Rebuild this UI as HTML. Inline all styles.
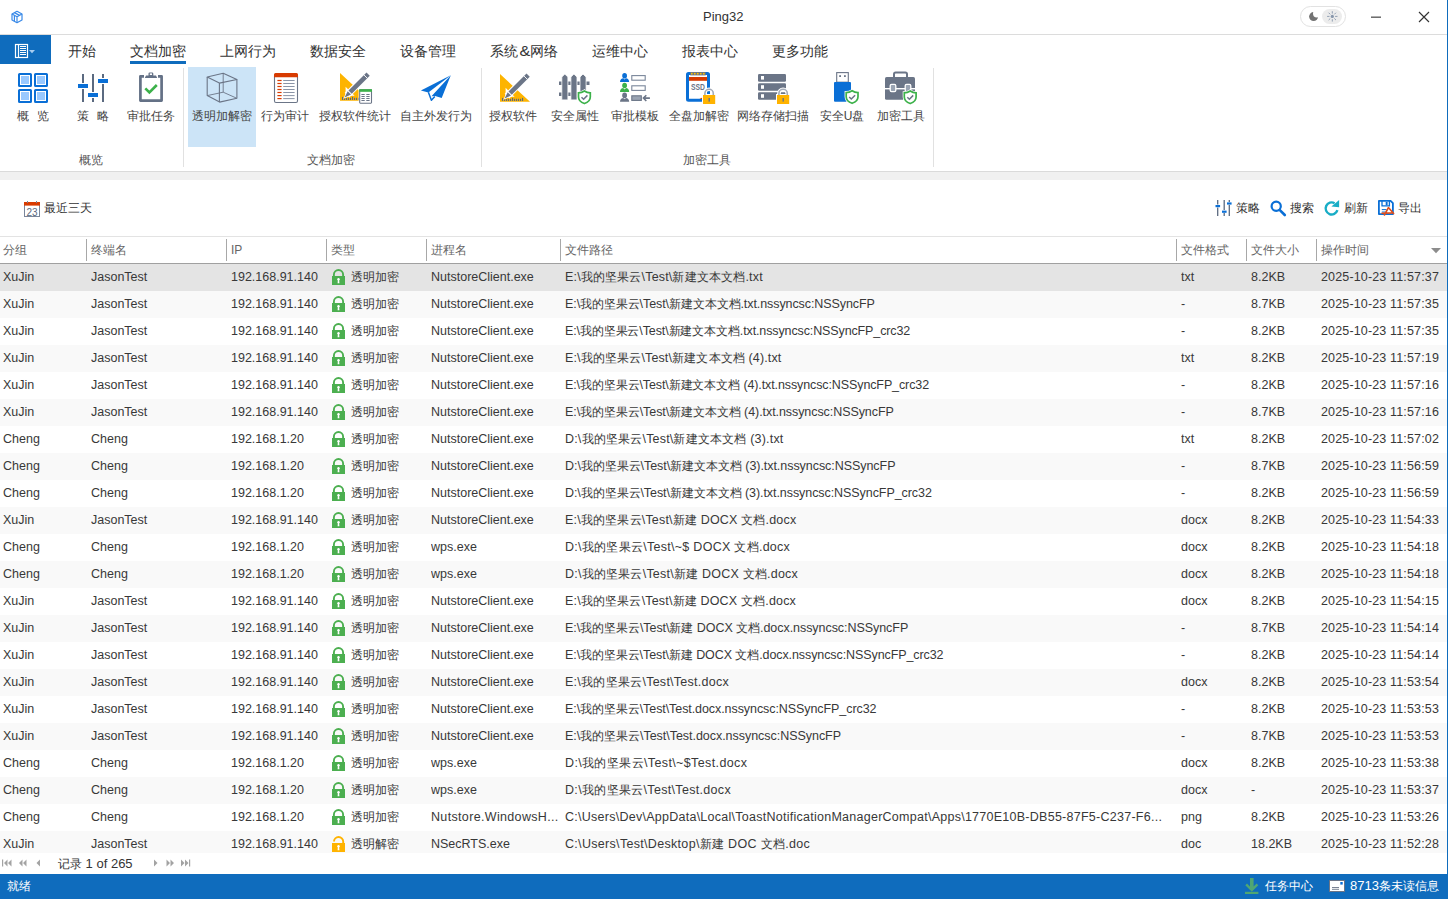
<!DOCTYPE html>
<html><head><meta charset="utf-8"><title>Ping32</title>
<style>
html,body{margin:0;padding:0}
body{width:1448px;height:899px;overflow:hidden;position:relative;background:#fff;font-family:"Liberation Sans",sans-serif;color:#333}
i{font-style:normal;font-size:12px}
.a{position:absolute;white-space:nowrap}
.tab{position:absolute;top:41px;font-size:14px;line-height:20px;color:#333}
.tab i{font-size:14px}
.lbl{position:absolute;top:107px;font-size:12px;line-height:18px;color:#444;text-align:center}
.glbl{position:absolute;top:151px;font-size:12px;line-height:18px;color:#555;text-align:center}
.vsep{position:absolute;width:1px;background:#e1e1e1}
.r{position:absolute;left:0;width:1447px;height:27px}
.c{position:absolute;top:0;height:27px;line-height:26px;font-size:12.5px;white-space:nowrap;overflow:hidden;color:#383838}
.lk{position:absolute;left:0;top:5px}
.hc{position:absolute;top:241px;line-height:18px;font-size:12px;color:#666;white-space:nowrap}
.hs{position:absolute;top:239px;width:1px;height:22px;background:#a8a8a8}
.tb{position:absolute;top:199px;font-size:12px;line-height:18px;color:#333}
svg.ov{position:absolute;left:0;top:0}
</style></head><body>
<!-- title bar -->
<div class="a" style="left:0;top:34px;width:1448px;height:1px;background:#dcdcdc"></div>
<div class="a" style="left:703px;top:8px;font-size:13px;line-height:18px;color:#333">Ping32</div>
<div class="a" style="left:1300px;top:6px;width:44px;height:19px;border:1px solid #e2e2e2;border-radius:11px"></div>
<div class="a" style="left:1322px;top:9px;width:20px;height:15px;border-radius:8px;background:#ececec"></div>
<!-- app button -->
<div class="a" style="left:0;top:35px;width:51px;height:29px;background:#0f6cbd"></div>
<!-- tabs -->
<div class="tab" style="left:68px"><i>开始</i></div>
<div class="tab" style="left:130px"><i>文档加密</i></div>
<div class="a" style="left:130px;top:61px;width:56px;height:3px;background:#0f6cbd"></div>
<div class="tab" style="left:220px"><i>上网行为</i></div>
<div class="tab" style="left:310px"><i>数据安全</i></div>
<div class="tab" style="left:400px"><i>设备管理</i></div>
<div class="tab" style="left:490px"><i>系统</i><span style="font-size:14.5px;margin:0 1px 0 1.5px;display:inline-block;transform:scaleX(1.12)">&amp;</span><i>网络</i></div>
<div class="tab" style="left:592px"><i>运维中心</i></div>
<div class="tab" style="left:682px"><i>报表中心</i></div>
<div class="tab" style="left:772px"><i>更多功能</i></div>
<!-- ribbon -->
<div class="a" style="left:188px;top:67px;width:68px;height:80px;background:#cce4f7"></div>
<div class="lbl" style="left:17px;width:32px;text-align:left"><i>概</i><i style="margin-left:8px">览</i></div>
<div class="lbl" style="left:77px;width:32px;text-align:left"><i>策</i><i style="margin-left:8px">略</i></div>
<div class="lbl" style="left:121px;width:60px"><i>审批任务</i></div>
<div class="lbl" style="left:187px;width:70px"><i>透明加解密</i></div>
<div class="lbl" style="left:255px;width:60px"><i>行为审计</i></div>
<div class="lbl" style="left:315px;width:80px"><i>授权软件统计</i></div>
<div class="lbl" style="left:396px;width:80px"><i>自主外发行为</i></div>
<div class="lbl" style="left:483px;width:60px"><i>授权软件</i></div>
<div class="lbl" style="left:545px;width:60px"><i>安全属性</i></div>
<div class="lbl" style="left:605px;width:60px"><i>审批模板</i></div>
<div class="lbl" style="left:664px;width:70px"><i>全盘加解密</i></div>
<div class="lbl" style="left:733px;width:80px"><i>网络存储扫描</i></div>
<div class="lbl" style="left:812px;width:60px"><i>安全U盘</i></div>
<div class="lbl" style="left:871px;width:60px"><i>加密工具</i></div>
<div class="glbl" style="left:61px;width:60px"><i>概览</i></div>
<div class="glbl" style="left:291px;width:80px"><i>文档加密</i></div>
<div class="glbl" style="left:667px;width:80px"><i>加密工具</i></div>
<div class="vsep" style="left:183px;top:68px;height:99px"></div>
<div class="vsep" style="left:481px;top:68px;height:99px"></div>
<div class="vsep" style="left:933px;top:68px;height:99px"></div>
<div class="a" style="left:0;top:171px;width:1448px;height:1px;background:#dadada"></div>
<div class="a" style="left:0;top:172px;width:1448px;height:8px;background:#f0f0f0"></div>
<!-- toolbar -->
<div class="tb" style="left:44px"><i>最近三天</i></div>
<div class="tb" style="left:1236px"><i>策略</i></div>
<div class="tb" style="left:1290px"><i>搜索</i></div>
<div class="tb" style="left:1344px"><i>刷新</i></div>
<div class="tb" style="left:1398px"><i>导出</i></div>
<div class="a" style="left:0;top:236px;width:1448px;height:1px;background:#e3e3e3"></div>
<!-- header -->
<div class="hc" style="left:3px"><i>分组</i></div>
<div class="hc" style="left:91px"><i>终端名</i></div>
<div class="hs" style="left:86px"></div>
<div class="hc" style="left:231px">IP</div>
<div class="hs" style="left:226px"></div>
<div class="hc" style="left:331px"><i>类型</i></div>
<div class="hs" style="left:326px"></div>
<div class="hc" style="left:431px"><i>进程名</i></div>
<div class="hs" style="left:426px"></div>
<div class="hc" style="left:565px"><i>文件路径</i></div>
<div class="hs" style="left:560px"></div>
<div class="hc" style="left:1181px"><i>文件格式</i></div>
<div class="hs" style="left:1176px"></div>
<div class="hc" style="left:1251px"><i>文件大小</i></div>
<div class="hs" style="left:1246px"></div>
<div class="hc" style="left:1321px"><i>操作时间</i></div>
<div class="hs" style="left:1316px"></div>
<div class="a" style="left:0;top:263px;width:1448px;height:1px;background:#a0a0a0"></div>
<!-- rows -->
<div class="a" style="left:0;top:264px;width:1448px;height:589px;overflow:hidden">
<div class="a" style="left:0;top:-264px;width:1448px;height:899px">
<div class="r" style="top:264px;background:#e4e4e4"><div class="c" style="left:3px;width:83px">XuJin</div><div class="c" style="left:91px;width:135px">JasonTest</div><div class="c" style="left:231px;width:95px">192.168.91.140</div><div class="c" style="left:332px;width:90px"><svg class="lk" width="13" height="16" viewBox="0 0 13 16"><path d="M1.9 8V5.6a4.6 4.6 0 0 1 9.2 0V8" fill="none" stroke="#4caf50" stroke-width="1.9"/><rect x="0" y="7" width="13" height="9" fill="#4caf50"/><circle cx="6.5" cy="10.2" r="1.2" fill="#fff"/><path d="M5.9 10.5 H7.1 L7.4 14.3 H5.6 Z" fill="#fff"/></svg><span style="position:absolute;left:19px;top:0"><i>透明加密</i></span></div><div class="c" style="left:431px;width:129px">NutstoreClient.exe</div><div class="c" style="left:565px;width:611px;letter-spacing:0.165px">E:\<i>我的坚果云</i>\Test\<i>新建文本文档</i>.txt</div><div class="c" style="left:1181px;width:65px">txt</div><div class="c" style="left:1251px;width:65px">8.2KB</div><div class="c" style="left:1321px;width:127px;letter-spacing:0.15px">2025-10-23 11:57:37</div></div>
<div class="r" style="top:291px;background:#f9f9f9"><div class="c" style="left:3px;width:83px">XuJin</div><div class="c" style="left:91px;width:135px">JasonTest</div><div class="c" style="left:231px;width:95px">192.168.91.140</div><div class="c" style="left:332px;width:90px"><svg class="lk" width="13" height="16" viewBox="0 0 13 16"><path d="M1.9 8V5.6a4.6 4.6 0 0 1 9.2 0V8" fill="none" stroke="#4caf50" stroke-width="1.9"/><rect x="0" y="7" width="13" height="9" fill="#4caf50"/><circle cx="6.5" cy="10.2" r="1.2" fill="#fff"/><path d="M5.9 10.5 H7.1 L7.4 14.3 H5.6 Z" fill="#fff"/></svg><span style="position:absolute;left:19px;top:0"><i>透明加密</i></span></div><div class="c" style="left:431px;width:129px">NutstoreClient.exe</div><div class="c" style="left:565px;width:611px;letter-spacing:-0.085px">E:\<i>我的坚果云</i>\Test\<i>新建文本文档</i>.txt.nssyncsc:NSSyncFP</div><div class="c" style="left:1181px;width:65px">-</div><div class="c" style="left:1251px;width:65px">8.7KB</div><div class="c" style="left:1321px;width:127px;letter-spacing:0.15px">2025-10-23 11:57:35</div></div>
<div class="r" style="top:318px;background:#ffffff"><div class="c" style="left:3px;width:83px">XuJin</div><div class="c" style="left:91px;width:135px">JasonTest</div><div class="c" style="left:231px;width:95px">192.168.91.140</div><div class="c" style="left:332px;width:90px"><svg class="lk" width="13" height="16" viewBox="0 0 13 16"><path d="M1.9 8V5.6a4.6 4.6 0 0 1 9.2 0V8" fill="none" stroke="#4caf50" stroke-width="1.9"/><rect x="0" y="7" width="13" height="9" fill="#4caf50"/><circle cx="6.5" cy="10.2" r="1.2" fill="#fff"/><path d="M5.9 10.5 H7.1 L7.4 14.3 H5.6 Z" fill="#fff"/></svg><span style="position:absolute;left:19px;top:0"><i>透明加密</i></span></div><div class="c" style="left:431px;width:129px">NutstoreClient.exe</div><div class="c" style="left:565px;width:611px;letter-spacing:-0.119px">E:\<i>我的坚果云</i>\Test\<i>新建文本文档</i>.txt.nssyncsc:NSSyncFP_crc32</div><div class="c" style="left:1181px;width:65px">-</div><div class="c" style="left:1251px;width:65px">8.2KB</div><div class="c" style="left:1321px;width:127px;letter-spacing:0.15px">2025-10-23 11:57:35</div></div>
<div class="r" style="top:345px;background:#f9f9f9"><div class="c" style="left:3px;width:83px">XuJin</div><div class="c" style="left:91px;width:135px">JasonTest</div><div class="c" style="left:231px;width:95px">192.168.91.140</div><div class="c" style="left:332px;width:90px"><svg class="lk" width="13" height="16" viewBox="0 0 13 16"><path d="M1.9 8V5.6a4.6 4.6 0 0 1 9.2 0V8" fill="none" stroke="#4caf50" stroke-width="1.9"/><rect x="0" y="7" width="13" height="9" fill="#4caf50"/><circle cx="6.5" cy="10.2" r="1.2" fill="#fff"/><path d="M5.9 10.5 H7.1 L7.4 14.3 H5.6 Z" fill="#fff"/></svg><span style="position:absolute;left:19px;top:0"><i>透明加密</i></span></div><div class="c" style="left:431px;width:129px">NutstoreClient.exe</div><div class="c" style="left:565px;width:611px;letter-spacing:0.137px">E:\<i>我的坚果云</i>\Test\<i>新建文本文档</i> (4).txt</div><div class="c" style="left:1181px;width:65px">txt</div><div class="c" style="left:1251px;width:65px">8.2KB</div><div class="c" style="left:1321px;width:127px;letter-spacing:0.15px">2025-10-23 11:57:19</div></div>
<div class="r" style="top:372px;background:#ffffff"><div class="c" style="left:3px;width:83px">XuJin</div><div class="c" style="left:91px;width:135px">JasonTest</div><div class="c" style="left:231px;width:95px">192.168.91.140</div><div class="c" style="left:332px;width:90px"><svg class="lk" width="13" height="16" viewBox="0 0 13 16"><path d="M1.9 8V5.6a4.6 4.6 0 0 1 9.2 0V8" fill="none" stroke="#4caf50" stroke-width="1.9"/><rect x="0" y="7" width="13" height="9" fill="#4caf50"/><circle cx="6.5" cy="10.2" r="1.2" fill="#fff"/><path d="M5.9 10.5 H7.1 L7.4 14.3 H5.6 Z" fill="#fff"/></svg><span style="position:absolute;left:19px;top:0"><i>透明加密</i></span></div><div class="c" style="left:431px;width:129px">NutstoreClient.exe</div><div class="c" style="left:565px;width:611px;letter-spacing:-0.108px">E:\<i>我的坚果云</i>\Test\<i>新建文本文档</i> (4).txt.nssyncsc:NSSyncFP_crc32</div><div class="c" style="left:1181px;width:65px">-</div><div class="c" style="left:1251px;width:65px">8.2KB</div><div class="c" style="left:1321px;width:127px;letter-spacing:0.15px">2025-10-23 11:57:16</div></div>
<div class="r" style="top:399px;background:#f9f9f9"><div class="c" style="left:3px;width:83px">XuJin</div><div class="c" style="left:91px;width:135px">JasonTest</div><div class="c" style="left:231px;width:95px">192.168.91.140</div><div class="c" style="left:332px;width:90px"><svg class="lk" width="13" height="16" viewBox="0 0 13 16"><path d="M1.9 8V5.6a4.6 4.6 0 0 1 9.2 0V8" fill="none" stroke="#4caf50" stroke-width="1.9"/><rect x="0" y="7" width="13" height="9" fill="#4caf50"/><circle cx="6.5" cy="10.2" r="1.2" fill="#fff"/><path d="M5.9 10.5 H7.1 L7.4 14.3 H5.6 Z" fill="#fff"/></svg><span style="position:absolute;left:19px;top:0"><i>透明加密</i></span></div><div class="c" style="left:431px;width:129px">NutstoreClient.exe</div><div class="c" style="left:565px;width:611px;letter-spacing:-0.073px">E:\<i>我的坚果云</i>\Test\<i>新建文本文档</i> (4).txt.nssyncsc:NSSyncFP</div><div class="c" style="left:1181px;width:65px">-</div><div class="c" style="left:1251px;width:65px">8.7KB</div><div class="c" style="left:1321px;width:127px;letter-spacing:0.15px">2025-10-23 11:57:16</div></div>
<div class="r" style="top:426px;background:#ffffff"><div class="c" style="left:3px;width:83px">Cheng</div><div class="c" style="left:91px;width:135px">Cheng</div><div class="c" style="left:231px;width:95px">192.168.1.20</div><div class="c" style="left:332px;width:90px"><svg class="lk" width="13" height="16" viewBox="0 0 13 16"><path d="M1.9 8V5.6a4.6 4.6 0 0 1 9.2 0V8" fill="none" stroke="#4caf50" stroke-width="1.9"/><rect x="0" y="7" width="13" height="9" fill="#4caf50"/><circle cx="6.5" cy="10.2" r="1.2" fill="#fff"/><path d="M5.9 10.5 H7.1 L7.4 14.3 H5.6 Z" fill="#fff"/></svg><span style="position:absolute;left:19px;top:0"><i>透明加密</i></span></div><div class="c" style="left:431px;width:129px">NutstoreClient.exe</div><div class="c" style="left:565px;width:611px;letter-spacing:0.185px">D:\<i>我的坚果云</i>\Test\<i>新建文本文档</i> (3).txt</div><div class="c" style="left:1181px;width:65px">txt</div><div class="c" style="left:1251px;width:65px">8.2KB</div><div class="c" style="left:1321px;width:127px;letter-spacing:0.15px">2025-10-23 11:57:02</div></div>
<div class="r" style="top:453px;background:#f9f9f9"><div class="c" style="left:3px;width:83px">Cheng</div><div class="c" style="left:91px;width:135px">Cheng</div><div class="c" style="left:231px;width:95px">192.168.1.20</div><div class="c" style="left:332px;width:90px"><svg class="lk" width="13" height="16" viewBox="0 0 13 16"><path d="M1.9 8V5.6a4.6 4.6 0 0 1 9.2 0V8" fill="none" stroke="#4caf50" stroke-width="1.9"/><rect x="0" y="7" width="13" height="9" fill="#4caf50"/><circle cx="6.5" cy="10.2" r="1.2" fill="#fff"/><path d="M5.9 10.5 H7.1 L7.4 14.3 H5.6 Z" fill="#fff"/></svg><span style="position:absolute;left:19px;top:0"><i>透明加密</i></span></div><div class="c" style="left:431px;width:129px">NutstoreClient.exe</div><div class="c" style="left:565px;width:611px;letter-spacing:-0.051px">D:\<i>我的坚果云</i>\Test\<i>新建文本文档</i> (3).txt.nssyncsc:NSSyncFP</div><div class="c" style="left:1181px;width:65px">-</div><div class="c" style="left:1251px;width:65px">8.7KB</div><div class="c" style="left:1321px;width:127px;letter-spacing:0.15px">2025-10-23 11:56:59</div></div>
<div class="r" style="top:480px;background:#ffffff"><div class="c" style="left:3px;width:83px">Cheng</div><div class="c" style="left:91px;width:135px">Cheng</div><div class="c" style="left:231px;width:95px">192.168.1.20</div><div class="c" style="left:332px;width:90px"><svg class="lk" width="13" height="16" viewBox="0 0 13 16"><path d="M1.9 8V5.6a4.6 4.6 0 0 1 9.2 0V8" fill="none" stroke="#4caf50" stroke-width="1.9"/><rect x="0" y="7" width="13" height="9" fill="#4caf50"/><circle cx="6.5" cy="10.2" r="1.2" fill="#fff"/><path d="M5.9 10.5 H7.1 L7.4 14.3 H5.6 Z" fill="#fff"/></svg><span style="position:absolute;left:19px;top:0"><i>透明加密</i></span></div><div class="c" style="left:431px;width:129px">NutstoreClient.exe</div><div class="c" style="left:565px;width:611px;letter-spacing:-0.067px">D:\<i>我的坚果云</i>\Test\<i>新建文本文档</i> (3).txt.nssyncsc:NSSyncFP_crc32</div><div class="c" style="left:1181px;width:65px">-</div><div class="c" style="left:1251px;width:65px">8.2KB</div><div class="c" style="left:1321px;width:127px;letter-spacing:0.15px">2025-10-23 11:56:59</div></div>
<div class="r" style="top:507px;background:#f9f9f9"><div class="c" style="left:3px;width:83px">XuJin</div><div class="c" style="left:91px;width:135px">JasonTest</div><div class="c" style="left:231px;width:95px">192.168.91.140</div><div class="c" style="left:332px;width:90px"><svg class="lk" width="13" height="16" viewBox="0 0 13 16"><path d="M1.9 8V5.6a4.6 4.6 0 0 1 9.2 0V8" fill="none" stroke="#4caf50" stroke-width="1.9"/><rect x="0" y="7" width="13" height="9" fill="#4caf50"/><circle cx="6.5" cy="10.2" r="1.2" fill="#fff"/><path d="M5.9 10.5 H7.1 L7.4 14.3 H5.6 Z" fill="#fff"/></svg><span style="position:absolute;left:19px;top:0"><i>透明加密</i></span></div><div class="c" style="left:431px;width:129px">NutstoreClient.exe</div><div class="c" style="left:565px;width:611px;letter-spacing:0.179px">E:\<i>我的坚果云</i>\Test\<i>新建</i> DOCX <i>文档</i>.docx</div><div class="c" style="left:1181px;width:65px">docx</div><div class="c" style="left:1251px;width:65px">8.2KB</div><div class="c" style="left:1321px;width:127px;letter-spacing:0.15px">2025-10-23 11:54:33</div></div>
<div class="r" style="top:534px;background:#ffffff"><div class="c" style="left:3px;width:83px">Cheng</div><div class="c" style="left:91px;width:135px">Cheng</div><div class="c" style="left:231px;width:95px">192.168.1.20</div><div class="c" style="left:332px;width:90px"><svg class="lk" width="13" height="16" viewBox="0 0 13 16"><path d="M1.9 8V5.6a4.6 4.6 0 0 1 9.2 0V8" fill="none" stroke="#4caf50" stroke-width="1.9"/><rect x="0" y="7" width="13" height="9" fill="#4caf50"/><circle cx="6.5" cy="10.2" r="1.2" fill="#fff"/><path d="M5.9 10.5 H7.1 L7.4 14.3 H5.6 Z" fill="#fff"/></svg><span style="position:absolute;left:19px;top:0"><i>透明加密</i></span></div><div class="c" style="left:431px;width:129px">wps.exe</div><div class="c" style="left:565px;width:611px;letter-spacing:0.279px">D:\<i>我的坚果云</i>\Test\~$ DOCX <i>文档</i>.docx</div><div class="c" style="left:1181px;width:65px">docx</div><div class="c" style="left:1251px;width:65px">8.2KB</div><div class="c" style="left:1321px;width:127px;letter-spacing:0.15px">2025-10-23 11:54:18</div></div>
<div class="r" style="top:561px;background:#f9f9f9"><div class="c" style="left:3px;width:83px">Cheng</div><div class="c" style="left:91px;width:135px">Cheng</div><div class="c" style="left:231px;width:95px">192.168.1.20</div><div class="c" style="left:332px;width:90px"><svg class="lk" width="13" height="16" viewBox="0 0 13 16"><path d="M1.9 8V5.6a4.6 4.6 0 0 1 9.2 0V8" fill="none" stroke="#4caf50" stroke-width="1.9"/><rect x="0" y="7" width="13" height="9" fill="#4caf50"/><circle cx="6.5" cy="10.2" r="1.2" fill="#fff"/><path d="M5.9 10.5 H7.1 L7.4 14.3 H5.6 Z" fill="#fff"/></svg><span style="position:absolute;left:19px;top:0"><i>透明加密</i></span></div><div class="c" style="left:431px;width:129px">wps.exe</div><div class="c" style="left:565px;width:611px;letter-spacing:0.214px">D:\<i>我的坚果云</i>\Test\<i>新建</i> DOCX <i>文档</i>.docx</div><div class="c" style="left:1181px;width:65px">docx</div><div class="c" style="left:1251px;width:65px">8.2KB</div><div class="c" style="left:1321px;width:127px;letter-spacing:0.15px">2025-10-23 11:54:18</div></div>
<div class="r" style="top:588px;background:#ffffff"><div class="c" style="left:3px;width:83px">XuJin</div><div class="c" style="left:91px;width:135px">JasonTest</div><div class="c" style="left:231px;width:95px">192.168.91.140</div><div class="c" style="left:332px;width:90px"><svg class="lk" width="13" height="16" viewBox="0 0 13 16"><path d="M1.9 8V5.6a4.6 4.6 0 0 1 9.2 0V8" fill="none" stroke="#4caf50" stroke-width="1.9"/><rect x="0" y="7" width="13" height="9" fill="#4caf50"/><circle cx="6.5" cy="10.2" r="1.2" fill="#fff"/><path d="M5.9 10.5 H7.1 L7.4 14.3 H5.6 Z" fill="#fff"/></svg><span style="position:absolute;left:19px;top:0"><i>透明加密</i></span></div><div class="c" style="left:431px;width:129px">NutstoreClient.exe</div><div class="c" style="left:565px;width:611px;letter-spacing:0.168px">E:\<i>我的坚果云</i>\Test\<i>新建</i> DOCX <i>文档</i>.docx</div><div class="c" style="left:1181px;width:65px">docx</div><div class="c" style="left:1251px;width:65px">8.2KB</div><div class="c" style="left:1321px;width:127px;letter-spacing:0.15px">2025-10-23 11:54:15</div></div>
<div class="r" style="top:615px;background:#f9f9f9"><div class="c" style="left:3px;width:83px">XuJin</div><div class="c" style="left:91px;width:135px">JasonTest</div><div class="c" style="left:231px;width:95px">192.168.91.140</div><div class="c" style="left:332px;width:90px"><svg class="lk" width="13" height="16" viewBox="0 0 13 16"><path d="M1.9 8V5.6a4.6 4.6 0 0 1 9.2 0V8" fill="none" stroke="#4caf50" stroke-width="1.9"/><rect x="0" y="7" width="13" height="9" fill="#4caf50"/><circle cx="6.5" cy="10.2" r="1.2" fill="#fff"/><path d="M5.9 10.5 H7.1 L7.4 14.3 H5.6 Z" fill="#fff"/></svg><span style="position:absolute;left:19px;top:0"><i>透明加密</i></span></div><div class="c" style="left:431px;width:129px">NutstoreClient.exe</div><div class="c" style="left:565px;width:611px;letter-spacing:-0.052px">E:\<i>我的坚果云</i>\Test\<i>新建</i> DOCX <i>文档</i>.docx.nssyncsc:NSSyncFP</div><div class="c" style="left:1181px;width:65px">-</div><div class="c" style="left:1251px;width:65px">8.7KB</div><div class="c" style="left:1321px;width:127px;letter-spacing:0.15px">2025-10-23 11:54:14</div></div>
<div class="r" style="top:642px;background:#ffffff"><div class="c" style="left:3px;width:83px">XuJin</div><div class="c" style="left:91px;width:135px">JasonTest</div><div class="c" style="left:231px;width:95px">192.168.91.140</div><div class="c" style="left:332px;width:90px"><svg class="lk" width="13" height="16" viewBox="0 0 13 16"><path d="M1.9 8V5.6a4.6 4.6 0 0 1 9.2 0V8" fill="none" stroke="#4caf50" stroke-width="1.9"/><rect x="0" y="7" width="13" height="9" fill="#4caf50"/><circle cx="6.5" cy="10.2" r="1.2" fill="#fff"/><path d="M5.9 10.5 H7.1 L7.4 14.3 H5.6 Z" fill="#fff"/></svg><span style="position:absolute;left:19px;top:0"><i>透明加密</i></span></div><div class="c" style="left:431px;width:129px">NutstoreClient.exe</div><div class="c" style="left:565px;width:611px;letter-spacing:-0.088px">E:\<i>我的坚果云</i>\Test\<i>新建</i> DOCX <i>文档</i>.docx.nssyncsc:NSSyncFP_crc32</div><div class="c" style="left:1181px;width:65px">-</div><div class="c" style="left:1251px;width:65px">8.2KB</div><div class="c" style="left:1321px;width:127px;letter-spacing:0.15px">2025-10-23 11:54:14</div></div>
<div class="r" style="top:669px;background:#f9f9f9"><div class="c" style="left:3px;width:83px">XuJin</div><div class="c" style="left:91px;width:135px">JasonTest</div><div class="c" style="left:231px;width:95px">192.168.91.140</div><div class="c" style="left:332px;width:90px"><svg class="lk" width="13" height="16" viewBox="0 0 13 16"><path d="M1.9 8V5.6a4.6 4.6 0 0 1 9.2 0V8" fill="none" stroke="#4caf50" stroke-width="1.9"/><rect x="0" y="7" width="13" height="9" fill="#4caf50"/><circle cx="6.5" cy="10.2" r="1.2" fill="#fff"/><path d="M5.9 10.5 H7.1 L7.4 14.3 H5.6 Z" fill="#fff"/></svg><span style="position:absolute;left:19px;top:0"><i>透明加密</i></span></div><div class="c" style="left:431px;width:129px">NutstoreClient.exe</div><div class="c" style="left:565px;width:611px;letter-spacing:0.264px">E:\<i>我的坚果云</i>\Test\Test.docx</div><div class="c" style="left:1181px;width:65px">docx</div><div class="c" style="left:1251px;width:65px">8.2KB</div><div class="c" style="left:1321px;width:127px;letter-spacing:0.15px">2025-10-23 11:53:54</div></div>
<div class="r" style="top:696px;background:#ffffff"><div class="c" style="left:3px;width:83px">XuJin</div><div class="c" style="left:91px;width:135px">JasonTest</div><div class="c" style="left:231px;width:95px">192.168.91.140</div><div class="c" style="left:332px;width:90px"><svg class="lk" width="13" height="16" viewBox="0 0 13 16"><path d="M1.9 8V5.6a4.6 4.6 0 0 1 9.2 0V8" fill="none" stroke="#4caf50" stroke-width="1.9"/><rect x="0" y="7" width="13" height="9" fill="#4caf50"/><circle cx="6.5" cy="10.2" r="1.2" fill="#fff"/><path d="M5.9 10.5 H7.1 L7.4 14.3 H5.6 Z" fill="#fff"/></svg><span style="position:absolute;left:19px;top:0"><i>透明加密</i></span></div><div class="c" style="left:431px;width:129px">NutstoreClient.exe</div><div class="c" style="left:565px;width:611px;letter-spacing:-0.076px">E:\<i>我的坚果云</i>\Test\Test.docx.nssyncsc:NSSyncFP_crc32</div><div class="c" style="left:1181px;width:65px">-</div><div class="c" style="left:1251px;width:65px">8.2KB</div><div class="c" style="left:1321px;width:127px;letter-spacing:0.15px">2025-10-23 11:53:53</div></div>
<div class="r" style="top:723px;background:#f9f9f9"><div class="c" style="left:3px;width:83px">XuJin</div><div class="c" style="left:91px;width:135px">JasonTest</div><div class="c" style="left:231px;width:95px">192.168.91.140</div><div class="c" style="left:332px;width:90px"><svg class="lk" width="13" height="16" viewBox="0 0 13 16"><path d="M1.9 8V5.6a4.6 4.6 0 0 1 9.2 0V8" fill="none" stroke="#4caf50" stroke-width="1.9"/><rect x="0" y="7" width="13" height="9" fill="#4caf50"/><circle cx="6.5" cy="10.2" r="1.2" fill="#fff"/><path d="M5.9 10.5 H7.1 L7.4 14.3 H5.6 Z" fill="#fff"/></svg><span style="position:absolute;left:19px;top:0"><i>透明加密</i></span></div><div class="c" style="left:431px;width:129px">NutstoreClient.exe</div><div class="c" style="left:565px;width:611px;letter-spacing:-0.035px">E:\<i>我的坚果云</i>\Test\Test.docx.nssyncsc:NSSyncFP</div><div class="c" style="left:1181px;width:65px">-</div><div class="c" style="left:1251px;width:65px">8.7KB</div><div class="c" style="left:1321px;width:127px;letter-spacing:0.15px">2025-10-23 11:53:53</div></div>
<div class="r" style="top:750px;background:#ffffff"><div class="c" style="left:3px;width:83px">Cheng</div><div class="c" style="left:91px;width:135px">Cheng</div><div class="c" style="left:231px;width:95px">192.168.1.20</div><div class="c" style="left:332px;width:90px"><svg class="lk" width="13" height="16" viewBox="0 0 13 16"><path d="M1.9 8V5.6a4.6 4.6 0 0 1 9.2 0V8" fill="none" stroke="#4caf50" stroke-width="1.9"/><rect x="0" y="7" width="13" height="9" fill="#4caf50"/><circle cx="6.5" cy="10.2" r="1.2" fill="#fff"/><path d="M5.9 10.5 H7.1 L7.4 14.3 H5.6 Z" fill="#fff"/></svg><span style="position:absolute;left:19px;top:0"><i>透明加密</i></span></div><div class="c" style="left:431px;width:129px">wps.exe</div><div class="c" style="left:565px;width:611px;letter-spacing:0.375px">D:\<i>我的坚果云</i>\Test\~$Test.docx</div><div class="c" style="left:1181px;width:65px">docx</div><div class="c" style="left:1251px;width:65px">8.2KB</div><div class="c" style="left:1321px;width:127px;letter-spacing:0.15px">2025-10-23 11:53:38</div></div>
<div class="r" style="top:777px;background:#f9f9f9"><div class="c" style="left:3px;width:83px">Cheng</div><div class="c" style="left:91px;width:135px">Cheng</div><div class="c" style="left:231px;width:95px">192.168.1.20</div><div class="c" style="left:332px;width:90px"><svg class="lk" width="13" height="16" viewBox="0 0 13 16"><path d="M1.9 8V5.6a4.6 4.6 0 0 1 9.2 0V8" fill="none" stroke="#4caf50" stroke-width="1.9"/><rect x="0" y="7" width="13" height="9" fill="#4caf50"/><circle cx="6.5" cy="10.2" r="1.2" fill="#fff"/><path d="M5.9 10.5 H7.1 L7.4 14.3 H5.6 Z" fill="#fff"/></svg><span style="position:absolute;left:19px;top:0"><i>透明加密</i></span></div><div class="c" style="left:431px;width:129px">wps.exe</div><div class="c" style="left:565px;width:611px;letter-spacing:0.318px">D:\<i>我的坚果云</i>\Test\Test.docx</div><div class="c" style="left:1181px;width:65px">docx</div><div class="c" style="left:1251px;width:65px">-</div><div class="c" style="left:1321px;width:127px;letter-spacing:0.15px">2025-10-23 11:53:37</div></div>
<div class="r" style="top:804px;background:#ffffff"><div class="c" style="left:3px;width:83px">Cheng</div><div class="c" style="left:91px;width:135px">Cheng</div><div class="c" style="left:231px;width:95px">192.168.1.20</div><div class="c" style="left:332px;width:90px"><svg class="lk" width="13" height="16" viewBox="0 0 13 16"><path d="M1.9 8V5.6a4.6 4.6 0 0 1 9.2 0V8" fill="none" stroke="#4caf50" stroke-width="1.9"/><rect x="0" y="7" width="13" height="9" fill="#4caf50"/><circle cx="6.5" cy="10.2" r="1.2" fill="#fff"/><path d="M5.9 10.5 H7.1 L7.4 14.3 H5.6 Z" fill="#fff"/></svg><span style="position:absolute;left:19px;top:0"><i>透明加密</i></span></div><div class="c" style="left:431px;width:129px;letter-spacing:0.34px">Nutstore.WindowsH...</div><div class="c" style="left:565px;width:611px;letter-spacing:0.26px">C:\Users\Dev\AppData\Local\ToastNotificationManagerCompat\Apps\1770E10B-DB55-87F5-C237-F6...</div><div class="c" style="left:1181px;width:65px">png</div><div class="c" style="left:1251px;width:65px">8.2KB</div><div class="c" style="left:1321px;width:127px;letter-spacing:0.15px">2025-10-23 11:53:26</div></div>
<div class="r" style="top:831px;background:#f9f9f9"><div class="c" style="left:3px;width:83px">XuJin</div><div class="c" style="left:91px;width:135px">JasonTest</div><div class="c" style="left:231px;width:95px">192.168.91.140</div><div class="c" style="left:332px;width:90px"><svg class="lk" width="13" height="16" viewBox="0 0 13 16"><path d="M2 5.6a4.6 4.6 0 0 1 9.2 0V8" fill="none" stroke="#ffb300" stroke-width="1.9"/><rect x="0" y="7" width="13" height="9" fill="#ffb300"/><circle cx="6.5" cy="10.2" r="1.2" fill="#fff"/><path d="M5.9 10.5 H7.1 L7.4 14.3 H5.6 Z" fill="#fff"/></svg><span style="position:absolute;left:19px;top:0"><i>透明解密</i></span></div><div class="c" style="left:431px;width:129px">NSecRTS.exe</div><div class="c" style="left:565px;width:611px;letter-spacing:0.312px">C:\Users\Test\Desktop\<i>新建</i> DOC <i>文档</i>.doc</div><div class="c" style="left:1181px;width:65px">doc</div><div class="c" style="left:1251px;width:65px">18.2KB</div><div class="c" style="left:1321px;width:127px;letter-spacing:0.15px">2025-10-23 11:52:28</div></div>
</div></div>
<!-- pager -->
<div class="a" style="left:58px;top:855px;font-size:13px;line-height:18px;color:#333"><i>记录</i> 1 of 265</div>
<!-- status bar -->
<div class="a" style="left:0;top:874px;width:1448px;height:25px;background:#0f6cbd"></div>
<div class="a" style="left:7px;top:877px;font-size:12px;line-height:18px;color:#fff"><i>就绪</i></div>
<div class="a" style="left:1265px;top:877px;font-size:12px;line-height:18px;color:#fff"><i>任务中心</i></div>
<div class="a" style="left:1350px;top:877px;font-size:13px;line-height:18px;color:#fff">8713<i>条未读信息</i></div>
<div class="a" style="left:1447px;top:0;width:1px;height:899px;background:#0f6cbd"></div>
<svg class="ov" width="1448" height="899" viewBox="0 0 1448 899">
<!-- app logo -->
<g fill="none" stroke="#3a8ae8" stroke-width="1.2" stroke-linejoin="round">
<path d="M17 11.3 L22 14 V20 L17 22.7 L12 20 V14 Z"/>
<path d="M12 14 L17 16.8 L22 14 M17 16.8 V22.7"/>
<path d="M14.4 12.6 L19.5 15.4 M14.4 15.4 V21.3"/>
</g>
<!-- theme toggle -->
<circle cx="1313.6" cy="16.6" r="4.5" fill="#737373"/><circle cx="1316.9" cy="13.6" r="3.9" fill="#fff"/>
<g stroke="#8796ab" stroke-width="0.9" stroke-linecap="round">
<circle cx="1332.3" cy="16.4" r="1.6" fill="#8796ab" stroke="none"/>
<path d="M1332.3 11.6 v1.6 M1332.3 19.6 v1.6 M1327.5 16.4 h1.6 M1335.5 16.4 h1.6 M1328.9 13 l1.1 1.1 M1334.6 18.7 l1.1 1.1 M1328.9 19.8 l1.1 -1.1 M1334.6 14.1 l1.1 -1.1"/>
</g>
<!-- min / close -->
<rect x="1371" y="16.6" width="10" height="1.1" fill="#333"/>
<path d="M1419 12 L1429 22 M1429 12 L1419 22" stroke="#333" stroke-width="1.15"/>
<!-- app menu button icon -->
<g fill="none" stroke="#fff">
<rect x="15.5" y="44.5" width="12" height="13" stroke-width="1.2"/>
<path d="M18.5 44.5 V57.5" stroke-width="1.2"/>
<path d="M20 46.5 h6 M20 48.5 h6 M20 50.5 h6 M20 52.5 h6 M20 54.5 h6" stroke-width="1"/>
</g>
<path d="M29 50 H35 L32 53.2 Z" fill="#a9cdf0"/>
<!-- overview -->
<g fill="none" stroke="#0a6fd6" stroke-width="2">
<rect x="19" y="74" width="12" height="12" rx="0.6"/><rect x="35" y="74" width="12" height="12" rx="0.6"/>
<rect x="19" y="90" width="12" height="12" rx="0.6"/><rect x="35" y="90" width="12" height="12" rx="0.6"/>
</g>
<g fill="#99c9ff"><rect x="21" y="76" width="8" height="8"/><rect x="37" y="76" width="8" height="8"/><rect x="21" y="92" width="8" height="8"/><rect x="37" y="92" width="8" height="8"/></g>
<!-- strategy -->
<g stroke="#5b6a80" stroke-width="2">
<path d="M83 74 V83 M83 89 V102 M93 74 V92 M93 98 V102 M103 74 V78 M103 84 V102"/>
</g>
<g fill="#0a6fd6"><rect x="78" y="84" width="10" height="4"/><rect x="88" y="93" width="10" height="4"/><rect x="98" y="79" width="10" height="4"/></g>
<!-- clipboard -->
<path d="M144 76.3 H140.4 V100.6 H161.6 V76.3 H158" fill="none" stroke="#647186" stroke-width="2.7" stroke-linejoin="round"/>
<path d="M144.8 78 L146 75.5 H148.5 V73.6 a1.2 1.2 0 0 1 1.2 -1.2 h2.4 a1.2 1.2 0 0 1 1.2 1.2 V75.5 H156 L157.2 78 Z" fill="#647186"/>
<rect x="149.8" y="73.4" width="2.2" height="1.6" fill="#fff"/>
<path d="M145.3 88.3 L149.4 92.4 L156.8 85" fill="none" stroke="#3cb14a" stroke-width="2.6"/>
<!-- cube -->
<g fill="none" stroke="#6b7587" stroke-width="1.1" stroke-linejoin="round">
<path d="M223.2 73.2 L207.2 77 L219.4 83.1 L236.9 79.5 Z"/>
<path d="M207.2 77 V95.6 L219.6 102.1 L236.9 98.3 V79.5 M219.4 83.1 V102.1"/>
<path d="M223.2 73.2 V92.2 L207.2 95.6 M223.2 92.2 L236.9 98.3" stroke-width="0.9"/>
</g>
<!-- audit doc -->
<rect x="274.5" y="74" width="23" height="28.5" rx="1.5" fill="#fff" stroke="#6b7587" stroke-width="1.1"/>
<path d="M274 77.2 V74.5 a1.5 1.5 0 0 1 1.5 -1.5 h21 a1.5 1.5 0 0 1 1.5 1.5 V77.2 Z" fill="#d83b01"/>
<g fill="#d83b01"><rect x="277.4" y="79.9" width="4.2" height="1.2"/><rect x="277.4" y="82.9" width="4.2" height="1.2"/><rect x="277.4" y="85.9" width="4.2" height="1.2"/><rect x="277.4" y="88.9" width="4.2" height="1.2"/><rect x="277.4" y="91.9" width="4.2" height="1.2"/><rect x="277.4" y="95" width="4.2" height="1.2"/><rect x="277.4" y="98" width="4.2" height="1.2"/></g>
<g fill="#8a94a6"><rect x="283.2" y="80" width="11.4" height="1"/><rect x="283.2" y="83" width="11.4" height="1"/><rect x="283.2" y="86" width="11.4" height="1"/><rect x="283.2" y="89" width="11.4" height="1"/><rect x="283.2" y="92" width="11.4" height="1"/><rect x="283.2" y="95.1" width="11.4" height="1"/><rect x="283.2" y="98.1" width="11.4" height="1"/></g>
<!-- set square + pencil (symbol) -->
<g transform="translate(340,73)">
<path d="M0 0 L0 27.7 L30 27.7 Z M5.6 13.7 L5.6 22.8 L14.6 22.8 Z" fill="#fdb400" fill-rule="evenodd"/>
<g fill="#5b6a80"><rect x="2" y="23.9" width="1.1" height="3.1"/><rect x="4" y="24.8" width="1.1" height="2.2"/><rect x="6" y="24.8" width="1.1" height="2.2"/><rect x="8" y="24.8" width="1.1" height="2.2"/><rect x="10" y="24.8" width="1.1" height="2.2"/><rect x="12" y="23.9" width="1.1" height="3.1"/><rect x="14" y="24.8" width="1.1" height="2.2"/><rect x="16" y="24.8" width="1.1" height="2.2"/><rect x="18" y="24.8" width="1.1" height="2.2"/><rect x="20" y="24.8" width="1.1" height="2.2"/><rect x="22" y="23.9" width="1.1" height="3.1"/></g>
<path d="M28 1.2 L7 22.2" stroke="#fff" stroke-width="6.6"/><path d="M7.1 17.1 L12.2 22.2 L3.4 25.8 Z" fill="#fff"/>
<path d="M28.1 1.1 L10.1 19.1" stroke="#6b7587" stroke-width="4.6"/>
<path d="M23.9 1.9 L27.3 5.3" stroke="#fff" stroke-width="0.9"/>
<path d="M7.7 18.3 L11 21.6 L4.6 24.6 Z" fill="#6b7587"/>
</g>
<g transform="translate(500,74)">
<path d="M0 0 L0 27.7 L30 27.7 Z M5.6 13.7 L5.6 22.8 L14.6 22.8 Z" fill="#fdb400" fill-rule="evenodd"/>
<g fill="#5b6a80"><rect x="2" y="23.9" width="1.1" height="3.1"/><rect x="4" y="24.8" width="1.1" height="2.2"/><rect x="6" y="24.8" width="1.1" height="2.2"/><rect x="8" y="24.8" width="1.1" height="2.2"/><rect x="10" y="24.8" width="1.1" height="2.2"/><rect x="12" y="23.9" width="1.1" height="3.1"/><rect x="14" y="24.8" width="1.1" height="2.2"/><rect x="16" y="24.8" width="1.1" height="2.2"/><rect x="18" y="24.8" width="1.1" height="2.2"/><rect x="20" y="24.8" width="1.1" height="2.2"/><rect x="22" y="23.9" width="1.1" height="3.1"/></g>
<path d="M28 1.2 L7 22.2" stroke="#fff" stroke-width="6.6"/><path d="M7.1 17.1 L12.2 22.2 L3.4 25.8 Z" fill="#fff"/>
<path d="M28.1 1.1 L10.1 19.1" stroke="#6b7587" stroke-width="4.6"/>
<path d="M23.9 1.9 L27.3 5.3" stroke="#fff" stroke-width="0.9"/>
<path d="M7.7 18.3 L11 21.6 L4.6 24.6 Z" fill="#6b7587"/>
</g>
<!-- mini sheet -->
<rect x="359.6" y="89.6" width="12" height="13.6" fill="#fff" stroke="#fff" stroke-width="2"/>
<rect x="359.7" y="89.7" width="11.8" height="13.5" rx="0.6" fill="#fff" stroke="#6b7587" stroke-width="1.1"/>
<rect x="359.2" y="89.2" width="12.8" height="2.6" fill="#3cb14a"/>
<g fill="#6b7587"><rect x="361.4" y="94" width="3.3" height="1"/><rect x="366.3" y="94" width="3.3" height="1"/><rect x="361.4" y="96" width="3.3" height="1"/><rect x="366.3" y="96" width="3.3" height="1"/><rect x="361.4" y="98" width="3.3" height="1"/><rect x="366.3" y="98" width="3.3" height="1"/><rect x="361.4" y="100" width="3.3" height="1"/><rect x="366.3" y="100" width="3.3" height="1"/></g>
<!-- paper plane -->
<path d="M428.4 92.3 L431.4 100.2 L434.8 96.4" fill="#fff" stroke="#0a6fd6" stroke-width="1.5" stroke-linejoin="round"/>
<path d="M420.9 90.4 L450.8 75.3 L428.4 92.5 Z" fill="#0a6fd6"/>
<path d="M431.5 96.3 L450.8 75.3 L441.7 98 L435.2 95.9 Z" fill="#0a6fd6"/>
<!-- fence -->
<g fill="#6b7587">
<rect x="559" y="81.5" width="30.5" height="3.5"/><rect x="559" y="92.5" width="30.5" height="3.5"/>
</g>
<g fill="#6b7587" stroke="#fff" stroke-width="0.8">
<path d="M561.8 77 L564.8 74 L567.9 77 V99.9 H561.8 Z"/>
<path d="M570.9 77 L573.9 74 L577 77 V99.9 H570.9 Z"/>
<path d="M580 77 L583 74 L586.1 77 V99.9 H580 Z"/>
</g>
<g transform="translate(577.6,90.2)">
<path d="M6.8 0.8 C5 2 3 2.6 0.9 2.6 V6.8 C0.9 10 3 12.1 6.8 13.3 C10.6 12.1 12.7 10 12.7 6.8 V2.6 C10.6 2.6 8.6 2 6.8 0.8 Z" fill="#fff" stroke="#fff" stroke-width="3.2"/>
<path d="M6.8 0.8 C5 2 3 2.6 0.9 2.6 V6.8 C0.9 10 3 12.1 6.8 13.3 C10.6 12.1 12.7 10 12.7 6.8 V2.6 C10.6 2.6 8.6 2 6.8 0.8 Z" fill="#fff" stroke="#3cb14a" stroke-width="1.7"/>
<path d="M3.9 7 L6 9 L9.8 5.2" fill="none" stroke="#6b7587" stroke-width="1.5"/>
</g>
<!-- approval template -->
<g transform="translate(620,72.8)" fill="#0a6fd6"><ellipse cx="4.6" cy="2.9" rx="2.4" ry="2.8"/><path d="M0 9.3 C0 6.6 1.6 5.6 3.2 5.4 L4.6 6.8 L6 5.4 C7.6 5.6 9.2 6.6 9.2 9.3 Z"/></g>
<g transform="translate(620,82.6)" fill="#3cb14a"><ellipse cx="4.6" cy="2.9" rx="2.4" ry="2.8"/><path d="M0 9.3 C0 6.6 1.6 5.6 3.2 5.4 L4.6 6.8 L6 5.4 C7.6 5.6 9.2 6.6 9.2 9.3 Z"/></g>
<g transform="translate(620,92.5)" fill="#6b7587"><ellipse cx="4.6" cy="2.9" rx="2.4" ry="2.8"/><path d="M0 9.3 C0 6.6 1.6 5.6 3.2 5.4 L4.6 6.8 L6 5.4 C7.6 5.6 9.2 6.6 9.2 9.3 Z"/></g>
<g fill="none" stroke="#7a869a" stroke-width="1.1"><rect x="631.8" y="75.6" width="13.4" height="4.6"/><rect x="631.8" y="85.8" width="13.4" height="4.6"/></g>
<rect x="631.8" y="95.8" width="9.5" height="4.6" fill="#9aa4b3" stroke="#6b7587" stroke-width="1.1"/>
<path d="M649.9 98.1 H643.4 M646.3 95.2 L643.4 98.1 L646.3 101" fill="none" stroke="#6b7587" stroke-width="1.6"/>
<!-- SSD -->
<rect x="687.5" y="73.5" width="21" height="26.8" rx="1" fill="#fff" stroke="#0a6fd6" stroke-width="3"/>
<rect x="690.2" y="72" width="15.5" height="3.4" fill="#6b7587"/>
<g fill="#ffc000"><rect x="691" y="72.9" width="1.6" height="1.6"/><rect x="694" y="72.9" width="1.6" height="1.6"/><rect x="697" y="72.9" width="1.6" height="1.6"/><rect x="700" y="72.9" width="1.6" height="1.6"/><rect x="703" y="72.9" width="1.6" height="1.6"/></g>
<rect x="689" y="77" width="18" height="3.8" fill="#d83b01"/>
<text x="698" y="90.4" font-family="Liberation Sans" font-size="8.2" font-weight="bold" fill="#6b7587" text-anchor="middle" textLength="14" lengthAdjust="spacingAndGlyphs">SSD</text>
<path d="M699.5 99 L707 95 V99 Z" fill="#d83b01"/>
<g transform="translate(703,89)">
<path d="M1.9 6 V4.5 a4.2 4.2 0 0 1 8.4 0 V6" fill="none" stroke="#fff" stroke-width="3.6"/>
<rect x="-1" y="5" width="14" height="11" fill="#fff"/>
<path d="M1.9 6 V4.5 a4.2 4.2 0 0 1 8.4 0 V6" fill="none" stroke="#a3abb8" stroke-width="1.6"/>
<rect x="0" y="6" width="12.2" height="9" fill="#ffb300"/>
<rect x="5.5" y="9" width="1.4" height="3.6" fill="#6b7587"/>
</g>
<!-- server -->
<g fill="#6b7587"><rect x="758" y="74" width="28" height="7.8" rx="1.2"/><rect x="758" y="83.3" width="28" height="7.4" rx="1.2"/><rect x="758" y="92.2" width="28" height="7.6" rx="1.2"/></g>
<g fill="#fff"><rect x="761" y="76" width="3" height="3.6"/><rect x="761" y="85.2" width="3" height="3.6"/><rect x="761" y="94.2" width="3" height="3.6"/></g>
<g transform="translate(777,89)">
<path d="M1.9 6 V4.5 a4.2 4.2 0 0 1 8.4 0 V6" fill="none" stroke="#fff" stroke-width="3.6"/>
<rect x="-1" y="5" width="14" height="11" fill="#fff"/>
<path d="M1.9 6 V4.5 a4.2 4.2 0 0 1 8.4 0 V6" fill="none" stroke="#a3abb8" stroke-width="1.6"/>
<rect x="0" y="6" width="12.2" height="9" fill="#ffb300"/>
<rect x="5.5" y="9" width="1.4" height="3.6" fill="#6b7587"/>
</g>
<!-- usb -->
<rect x="836.7" y="72.6" width="11.6" height="9.6" fill="#fff" stroke="#6b7587" stroke-width="1.1"/>
<rect x="839.2" y="75.2" width="1.8" height="1.8" fill="#6b7587"/><rect x="844" y="75.2" width="1.8" height="1.8" fill="#6b7587"/>
<rect x="834" y="82" width="17" height="19.7" rx="1" fill="#0a6fd6"/>
<g transform="translate(845.3,90)">
<path d="M6.8 0.8 C5 2 3 2.6 0.9 2.6 V6.8 C0.9 10 3 12.1 6.8 13.3 C10.6 12.1 12.7 10 12.7 6.8 V2.6 C10.6 2.6 8.6 2 6.8 0.8 Z" fill="#fff" stroke="#fff" stroke-width="3.2"/>
<path d="M6.8 0.8 C5 2 3 2.6 0.9 2.6 V6.8 C0.9 10 3 12.1 6.8 13.3 C10.6 12.1 12.7 10 12.7 6.8 V2.6 C10.6 2.6 8.6 2 6.8 0.8 Z" fill="#fff" stroke="#3cb14a" stroke-width="1.7"/>
<path d="M3.9 7 L6 9 L9.8 5.2" fill="none" stroke="#6b7587" stroke-width="1.5"/>
</g>
<!-- briefcase -->
<path d="M894 77 V74.2 a1.6 1.6 0 0 1 1.6 -1.6 H905.4 a1.6 1.6 0 0 1 1.6 1.6 V77" fill="none" stroke="#6b7587" stroke-width="2"/>
<rect x="885" y="76.9" width="30" height="22.9" rx="1.6" fill="#6b7587"/>
<rect x="885" y="88" width="30" height="1.4" fill="#fff"/>
<rect x="890.2" y="84.3" width="5.6" height="7.3" rx="1.4" fill="#9aa4b3" stroke="#fff" stroke-width="1.3"/>
<rect x="905.2" y="84.3" width="5.6" height="7.3" rx="1.4" fill="#9aa4b3" stroke="#fff" stroke-width="1.3"/>
<g transform="translate(903.4,90.2)">
<path d="M6.8 0.8 C5 2 3 2.6 0.9 2.6 V6.8 C0.9 10 3 12.1 6.8 13.3 C10.6 12.1 12.7 10 12.7 6.8 V2.6 C10.6 2.6 8.6 2 6.8 0.8 Z" fill="#fff" stroke="#fff" stroke-width="3.2"/>
<path d="M6.8 0.8 C5 2 3 2.6 0.9 2.6 V6.8 C0.9 10 3 12.1 6.8 13.3 C10.6 12.1 12.7 10 12.7 6.8 V2.6 C10.6 2.6 8.6 2 6.8 0.8 Z" fill="#fff" stroke="#3cb14a" stroke-width="1.7"/>
<path d="M3.9 7 L6 9 L9.8 5.2" fill="none" stroke="#6b7587" stroke-width="1.5"/>
</g>
<!-- toolbar: calendar -->
<rect x="24.5" y="203.5" width="15" height="13" fill="#fff" stroke="#7a869a" stroke-width="1"/>
<rect x="24" y="202" width="16" height="3.6" fill="#d83b01"/>
<path d="M27.5 201 V203 M36.5 201 V203" stroke="#7a869a" stroke-width="1"/>
<text x="32" y="215.6" font-family="Liberation Sans" font-size="10" fill="#5b6a80" text-anchor="middle">23</text>
<!-- toolbar: strategy -->
<g stroke="#5b6a80" stroke-width="1.3"><path d="M1217.7 200 V204.5 M1217.7 207.5 V216 M1224.2 200 V210 M1224.2 213 V216 M1229.3 200 V202 M1229.3 205 V216"/></g>
<g fill="#0a6fd6"><rect x="1215.5" y="205" width="4.6" height="2.2"/><rect x="1222" y="210.6" width="4.6" height="2.2"/><rect x="1227" y="202.4" width="4.6" height="2.2"/></g>
<!-- search -->
<circle cx="1276.2" cy="206.3" r="4.6" fill="none" stroke="#0a6fd6" stroke-width="2.2"/>
<path d="M1279.6 209.8 L1284.8 215" stroke="#0a6fd6" stroke-width="2.6" stroke-linecap="round"/>
<!-- refresh -->
<path d="M1337.4 210.2 A6 6 0 1 1 1334.6 203.2" fill="none" stroke="#19adc6" stroke-width="2.4"/>
<path d="M1331.4 206.6 L1339.1 199.9 L1339.1 207.2 Z" fill="#19adc6"/>
<!-- export -->
<path d="M1378.9 200.9 H1390.6 L1392.9 203.2 V214.1 H1378.9 Z" fill="#fff" stroke="#0a6fd6" stroke-width="1.8" stroke-linejoin="round"/>
<path d="M1382 201 V205.9 H1389.4 V201" fill="none" stroke="#0a6fd6" stroke-width="1.3"/>
<rect x="1385.7" y="202" width="1.9" height="3.2" fill="#0a6fd6"/>
<path d="M1381.8 209.6 H1386.5 M1381.8 212 H1385.6" stroke="#0a6fd6" stroke-width="1"/>
<path d="M1384.4 215 L1388.4 207.6 L1393.6 213.6 M1382 213.3 L1392 212.9" fill="none" stroke="#e04e1b" stroke-width="1.6" stroke-linecap="round" stroke-linejoin="round"/>
<!-- sort arrow -->
<path d="M1431 248 H1441 L1436 253.2 Z" fill="#8c8c8c"/>
<!-- pager icons -->
<g fill="#a3a3a3">
<rect x="2" y="859.5" width="1.2" height="7"/><path d="M7.5 859.5 V866.5 L4 863 Z M11.5 859.5 V866.5 L8 863 Z"/>
<path d="M22.5 859.5 V866.5 L19 863 Z M26.5 859.5 V866.5 L23 863 Z"/>
<path d="M40 859.5 V866.5 L36.5 863 Z"/>
<path d="M154 859.5 V866.5 L157.5 863 Z"/>
<path d="M166.5 859.5 V866.5 L170 863 Z M170.5 859.5 V866.5 L174 863 Z"/>
<path d="M181 859.5 V866.5 L184.5 863 Z M185 859.5 V866.5 L188.5 863 Z"/><rect x="189" y="859.5" width="1.2" height="7"/>
</g>
<!-- status: download -->
<path d="M1250 878 H1253.6 V886.5 L1256.6 883.5 L1258.3 885.2 L1251.8 891.7 L1245.3 885.2 L1247 883.5 L1250 886.5 Z" fill="#4fa673"/>
<rect x="1245" y="891.8" width="13.4" height="2.2" fill="#4fa673"/>
<!-- mail -->
<rect x="1329.5" y="880.5" width="15" height="11" fill="#fff" stroke="#6b7587" stroke-width="1"/>
<path d="M1332 887.5 h7 M1332 889.3 h7" stroke="#6b7587" stroke-width="0.9"/>
<rect x="1340.3" y="882" width="2.4" height="2.6" fill="#0a6fd6"/>
</svg>

</body></html>
